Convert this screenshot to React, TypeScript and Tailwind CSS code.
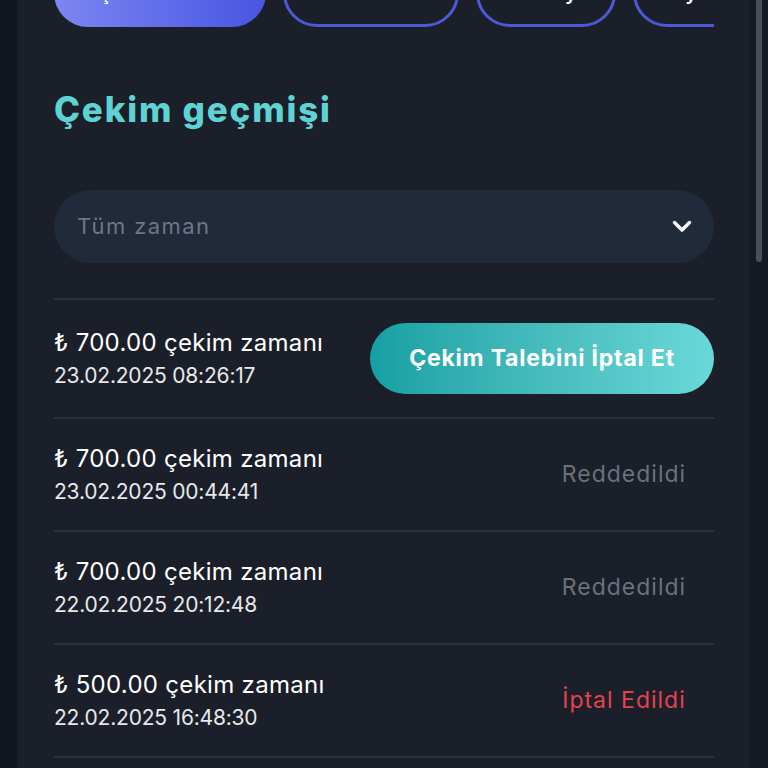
type Withdrawal = {
  amount: string;
  date: string;
  status: "pending" | "rejected" | "cancelled";
};

const withdrawals: Withdrawal[] = [
  { amount: "700.00", date: "23.02.2025 08:26:17", status: "pending" },
  { amount: "700.00", date: "23.02.2025 00:44:41", status: "rejected" },
  { amount: "700.00", date: "22.02.2025 20:12:48", status: "rejected" },
  { amount: "500.00", date: "22.02.2025 16:48:30", status: "cancelled" },
];

const tabs = [
  { label: "Çekim Talebi", width: "w-[212px]" },
  { label: "Bonuslar", width: "w-[176px]" },
  { label: "Promosyon", width: "w-[140px]" },
  { label: "Oyunlar", width: "w-[150px]" },
];

function Tabs() {
  return (
    <div className="-mt-[41px] flex gap-[17px] overflow-hidden">
      {tabs.map((tab, i) => (
        <div
          key={tab.label}
          className={`flex h-[68px] shrink-0 items-center justify-center rounded-full text-[20px] font-semibold text-white ${tab.width} ${
            i === 0
              ? "bg-gradient-to-r from-[#7d86f2] to-[#4a54e2]"
              : "border-[3px] border-[#4d59d6]"
          }`}
        >
          {tab.label}
        </div>
      ))}
    </div>
  );
}

function Chevron() {
  return (
    <svg width="20" height="13" viewBox="0 0 20 13" fill="none">
      <path
        d="M2.5 2.5 10 10l7.5-7.5"
        stroke="white"
        strokeWidth="3.4"
        strokeLinecap="round"
        strokeLinejoin="round"
      />
    </svg>
  );
}

function StatusCell({ status }: { status: Withdrawal["status"] }) {
  if (status === "pending") {
    return (
      <button className="flex h-[71px] w-[344px] items-center justify-center rounded-full bg-gradient-to-r from-[#14a0a3] to-[#6ad8d8] text-[23px] font-bold tracking-[0.8px] text-white">
        Çekim Talebini İptal Et
      </button>
    );
  }
  return (
    <div
      className={`w-[180px] text-center text-[23px] tracking-[1px] ${
        status === "rejected" ? "text-[#6b717c]" : "text-[#e5434f]"
      }`}
    >
      {status === "rejected" ? "Reddedildi" : "İptal Edildi"}
    </div>
  );
}

export default function App() {
  return (
    <div
      className="flex h-screen w-full overflow-hidden bg-[#111720] text-white"
      style={{ fontFamily: "Inter, 'Noto Sans', sans-serif" }}
    >
      <div className="w-[17px] shrink-0 bg-[#10151e]" />

      <main className="flex flex-1 flex-col overflow-hidden bg-[#1a1f2a] pl-[37px] pr-[36px]">
        <Tabs />

        <h1 className="mt-[60px] text-[35px] font-extrabold leading-[44px] tracking-[1.8px] text-[#5fd2d4]">
          Çekim geçmişi
        </h1>

        <button className="mt-[59px] flex h-[73px] w-full items-center justify-between rounded-full bg-[#212a3a] pl-[23px] pr-[22px]">
          <span className="text-[22px] tracking-[1.4px] text-[#6d7688]">Tüm zaman</span>
          <Chevron />
        </button>

        <div className="mt-[35px] border-t-2 border-[#2a303c]">
          {withdrawals.map((w, i) => (
            <div
              key={w.date}
              className={`flex items-center justify-between border-b-2 border-[#2a303c] ${
                i === 0 ? "h-[119px]" : "h-[113px]"
              }`}
            >
              <div className="flex flex-col gap-[3px]">
                <span className="text-[24px] leading-[31px] tracking-[0.3px] text-white">
                  ₺ {w.amount} çekim zamanı
                </span>
                <span className="text-[21px] leading-[30px] tracking-[-0.2px] text-white/90">
                  {w.date}
                </span>
              </div>
              <StatusCell status={w.status} />
            </div>
          ))}
        </div>
      </main>

      <div className="flex w-[18px] shrink-0 justify-center bg-[#141a24]">
        <div className="h-[262px] w-[6px] rounded-b-full bg-[#4a4e57]" />
      </div>
    </div>
  );
}
